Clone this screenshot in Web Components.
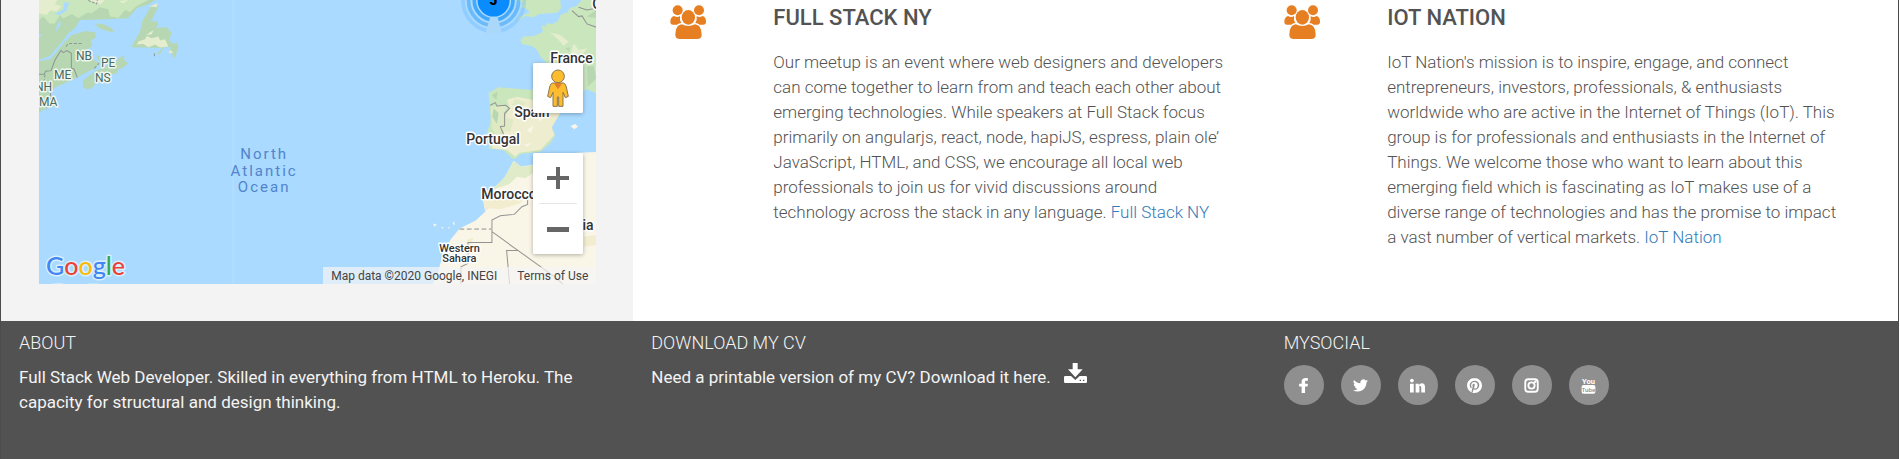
<!DOCTYPE html>
<html lang="en">
<head>
<meta charset="utf-8">
<title>Full Stack Web Developer</title>
<style>
body { margin: 0; background: #fff; font-family: Roboto, "Liberation Sans", sans-serif; }
</style>
</head>
<body>
<portfolio-page>
  <area-map slot="side"></area-map>
  <meetup-card heading="FULL STACK NY">Our meetup is an event where web designers and developers can come together to learn from and teach each other about emerging technologies. While speakers at Full Stack focus primarily on angularjs, react, node, hapiJS, espress, plain ole’ JavaScript, HTML, and CSS, we encourage all local web professionals to join us for vivid discussions around technology across the stack in any language. <text-link>Full Stack NY</text-link></meetup-card>
  <meetup-card heading="IOT NATION">IoT Nation's mission is to inspire, engage, and connect entrepreneurs, investors, professionals, &amp; enthusiasts worldwide who are active in the Internet of Things (IoT). This group is for professionals and enthusiasts in the Internet of Things. We welcome those who want to learn about this emerging field which is fascinating as IoT makes use of a diverse range of technologies and has the promise to impact a vast number of vertical markets. <text-link>IoT Nation</text-link></meetup-card>
  <footer-column slot="footer" heading="ABOUT">Full Stack Web Developer. Skilled in everything from HTML to Heroku. The capacity for structural and design thinking.</footer-column>
  <footer-column slot="footer" heading="DOWNLOAD MY CV">Need a printable version of my CV? Download it here. <download-link></download-link></footer-column>
  <footer-column slot="footer" heading="MYSOCIAL"><social-links></social-links></footer-column>
</portfolio-page>

<script>
function define(name, render) {
  customElements.define(name, class extends HTMLElement {
    constructor() {
      super();
      this.attachShadow({ mode: 'open' });
    }
    connectedCallback() {
      this.shadowRoot.innerHTML = render(this);
    }
  });
}

define('portfolio-page', () => `
<style>
:host { display: block; margin-right: 1px; border: solid #4c4c4c; border-width: 0 1px 1px; background: #525252; color: #535353; }
main { display: grid; grid-template-columns: 1fr 2fr; background: #fff; }
aside { background: #f3f3f3; padding: 0 37px 37px 38px; }
section { display: grid; grid-template-columns: 1fr 1fr; padding-left: 37px; align-items: start; }
footer { display: grid; grid-template-columns: repeat(3, 1fr); padding: 10px 0 53px; }
</style>
<main><aside><slot name="side"></slot></aside><section><slot></slot></section></main>
<footer><slot name="footer"></slot></footer>`);

define('meetup-card', el => `
<style>
:host { display: grid; grid-template-columns: 103px 1fr; padding: 2px 52px 0 0; }
svg { display: block; width: 36px; height: 34px; margin-top: 3px; fill: #e67e22; }
h2 { margin: 0 0 16px; font-size: 22px; line-height: 32px; font-weight: 500; }
p { margin: 0; font-size: 17px; line-height: 25px; font-weight: 300; }
</style>
<svg viewBox="30 15 108 102" aria-hidden="true">
  <circle cx="53" cy="31" r="15"/><circle cx="117" cy="31" r="15"/>
  <path d="M42 48q11 6 18 0q-2 12 4 21q-8 0-13 5H39q-8 0-8-9q0-14 11-17zM128 48q-11 6-18 0q2 12-4 21q8 0 13 5h11q8 0 8-9q0-14-10-17z"/>
  <ellipse cx="85" cy="52" rx="20" ry="22"/>
  <path d="M65 73q20 10 40 0q20 2 20 31q0 13-14 13H60q-14 0-14-13q0-29 19-31z"/>
</svg>
<div><h2>${el.getAttribute('heading')}</h2><p><slot></slot></p></div>`);

define('text-link', () => `
<style>:host { display: inline; } a { color: #337ab7; text-decoration: none; }</style>
<a href="#"><slot></slot></a>`);

define('footer-column', el => `
<style>
:host { display: block; padding: 0 18px; color: #f4f4f4; }
h3 { margin: 0 0 10px; font-size: 18px; line-height: 24px; font-weight: 300; }
div { font-size: 17px; line-height: 25px; }
</style>
<h3>${el.getAttribute('heading')}</h3><div><slot></slot></div>`);

define('download-link', () => `
<style>
:host { display: inline-block; margin: -4px 0 0 9px; }
svg { display: block; width: 23px; height: 20px; fill: #fff; }
</style>
<a href="#" aria-label="Download my CV"><svg viewBox="0 0 69 60"><path fill-rule="evenodd" d="M26 0h15v19h15L34 43 12 19h14zM4 39h17l13 12 13-12h18q4 0 4 4v13q0 4-4 4H4q-4 0-4-4V43q0-4 4-4zM47 50h4v4h-4zM57 50h4v4h-4z"/></svg></a>`);

const networks = [
  ['Facebook', '<path d="M14.500 13.500h4l.5-4.500h-4.500V7c0-2 .5-2.500 2-2.500H19V.2C18 0 16.900 0 15.600 0 11.500 0 9 2 9 6v3H5v4.500h4V24h5.500z"/>'],
  ['Twitter', '<path d="M23.950 4.570a10 10 0 0 1-2.820.770 4.960 4.960 0 0 0 2.160-2.720c-.950.560-2 .960-3.130 1.180a4.920 4.920 0 0 0-8.380 4.490C7.690 8.100 4.070 6.130 1.640 3.160a4.920 4.920 0 0 0 1.520 6.570 4.900 4.900 0 0 1-2.230-.610v.060a4.920 4.920 0 0 0 3.950 4.830 4.900 4.900 0 0 1-2.210.080 4.940 4.940 0 0 0 4.600 3.420A9.870 9.870 0 0 1 0 19.540a13.940 13.940 0 0 0 7.550 2.210c9.050 0 14-7.500 14-13.980 0-.210 0-.420-.020-.630a9.940 9.940 0 0 0 2.460-2.550z"/>'],
  ['LinkedIn', '<circle cx="3" cy="4" r="3"/><path d="M0 9h6v14H0zM9 9h5v2q2-2.500 5-2.500 5 0 5 6V23h-6v-7.500q0-3-2-3T15 15.500V23H9z"/>'],
  ['Pinterest', '<path d="M12.017 0C5.396 0 .029 5.367.029 11.987c0 5.079 3.158 9.417 7.618 11.162-.105-.949-.199-2.403.041-3.439.219-.937 1.406-5.957 1.406-5.957s-.359-.72-.359-1.781c0-1.663.967-2.911 2.168-2.911 1.024 0 1.518.769 1.518 1.688 0 1.029-.653 2.567-.992 3.992-.285 1.193.6 2.165 1.775 2.165 2.128 0 3.768-2.245 3.768-5.487 0-2.861-2.063-4.869-5.008-4.869-3.41 0-5.409 2.562-5.409 5.199 0 1.033.394 2.143.889 2.741.099.12.112.225.085.345-.09.375-.293 1.199-.334 1.363-.053.225-.172.271-.401.165-1.495-.69-2.433-2.878-2.433-4.646 0-3.776 2.748-7.252 7.92-7.252 4.158 0 7.392 2.967 7.392 6.923 0 4.135-2.607 7.462-6.233 7.462-1.214 0-2.354-.629-2.758-1.379l-.749 2.848c-.269 1.045-1.004 2.352-1.498 3.146 1.123.345 2.306.535 3.55.535 6.607 0 11.985-5.365 11.985-11.987C23.97 5.39 18.592.026 11.985.026z"/>'],
  ['Instagram', '<g fill="none" stroke="#fff" stroke-width="3"><rect x="2" y="2" width="20" height="20" rx="5"/><circle cx="12" cy="12" r="5"/></g><circle cx="18" cy="6" r="2"/>'],
  ['YouTube', '<text x="12" y="9" text-anchor="middle" font-size="12" font-weight="700">You</text><rect x="1" y="11" width="22" height="14" rx="3"/><text x="12" y="22" text-anchor="middle" font-size="10" font-weight="500" fill="#8f8f8f">Tube</text>']
];
define('social-links', () => `
<style>
:host { display: block; }
nav { display: flex; gap: 17px; }
a { display: grid; place-items: center; width: 40px; height: 40px; border-radius: 50%; background: #8f8f8f; }
svg { display: block; width: 15px; height: 15px; fill: #fff; overflow: visible; }
</style>
<nav>${networks.map(([name, art]) => `<a href="#" aria-label="${name}"><svg viewBox="0 0 24 24">${art}</svg></a>`).join('')}</nav>`);

define('area-map', () => `
<style>
:host { display: block; position: relative; overflow: hidden; background: #aadaff; }
.chart { display: block; width: 100%; height: 284px; }
button { display: grid; place-items: center; width: 50px; height: 50px; padding: 0; border: 0; background: #fff; }
.person, .zoom { position: absolute; right: 13px; background: #fff; border-radius: 2px; box-shadow: 0 1px 4px rgba(0,0,0,.3); overflow: hidden; }
.person { top: 63px; }
.zoom { bottom: 30px; }
hr { margin: 0 6px; border: 0; height: 1px; background: #e6e6e6; }
.credit { position: absolute; right: 0; bottom: 0; display: flex; gap: 20px; padding: 1px 8px 0; background: rgba(245,245,245,.7); color: #444; font-size: 12px; line-height: 16px; }
.credit a { color: inherit; text-decoration: none; }
.label { fill: #333; stroke: #fff; stroke-width: 3px; stroke-linejoin: round; paint-order: stroke; font-weight: 500; font-size: 14px; }
.small { font-size: 11px; }
.state { font-weight: 400; font-size: 12px; fill: #466b66; stroke: #eef5ec; }
.sea { fill: #5184cd; font-size: 15px; letter-spacing: 2px; }
.logo { font: 500 25px Lato, sans-serif; stroke: #d9effd; stroke-width: 3px; paint-order: stroke; stroke-linejoin: round; }
</style>
<svg class="chart" viewBox="39 0 557 284" preserveAspectRatio="xMidYMid slice" role="img" aria-label="Map of the North Atlantic">
  <rect x="39" width="557" height="284" fill="#aadaff"/>
  <path d="M233 0V284" stroke="#b9e0ff"/>
  <g transform="scale(.33333)">
    <path fill="#b7d7b2" d="M117 0H465L448 12 410 25 398 40 383 55 300 59 240 60 225 85 205 100 187 125 165 150 150 168 117 180zM117 184L150 178 165 162 190 130 215 105 255 93 285 97 288 113 272 122 276 138 262 148 276 165 278 178 300 190 285 205 250 222 232 232 215 240 190 252 165 262 150 278 153 300 165 318 140 325 120 335H117z"/>
    <path fill="#c9e6bd" d="M117 0H445L410 18 390 36 375 30 355 54 330 50 325 28 300 22 275 40 262 38 235 55 215 42 190 56 180 45 165 70 150 72 130 50 117 60z"/>
    <path fill="#e5edcf" d="M117 0H172L165 14 185 18 170 35 150 32 140 45 117 40zM262 0H315L302 14 282 8zM355 4L385 0 370 10z"/>
    <path fill="#aadaff" d="M192 8L208 8 200 32 178 46 165 42 190 28zM117 100L126 105 117 112zM170 80L180 60 182 75 168 96z"/>
    <path fill="#b7d7b2" d="M285 70L310 73 330 82 342 93 335 97 315 91 298 85zM248 242L285 213 318 200 345 190 355 176 373 165 372 180 384 190 370 203 355 208 350 220 320 228 298 238 275 265 262 268 249 260zM395 138L420 95 428 60 440 42 450 22 473 12 475 20 453 65 470 64 475 74 468 84 500 82 515 100 506 120 520 132 530 128 535 142 525 174 518 168 515 155 505 162 512 142 492 142 478 164 470 162 487 144 395 142zM288 165L300 170 295 183z"/>
    <path fill="#e5edcf" d="M415 125L435 118 440 108 455 115 475 110 480 122 495 118 505 140 480 143 465 134 445 142 430 132 410 134zM438 105L460 90 455 103zM447 20L473 10 470 22zM510 150L520 158 505 160z"/>
    <g fill="none" stroke="#8b9796" stroke-width="3">
      <path d="M117 223H133L137 214 153 212 165 180 183 151 190 158 200 152 214 160V205L222 207 232 233"/>
      <path stroke-dasharray="9 5" d="M198 140L205 131 245 131M135 224L132 245M152 280L150 302M140 315V330M283 205L297 190M463 160V170"/>
      <path stroke-dasharray="8 4" d="M265 2L290 12 292 0"/>
    </g>
    <path fill="#d4edfd" d="M150 850L175 848 200 852zM262 850H295V852H262z"/>
  </g>
  <g transform="translate(320) scale(.33333)">
    <path fill="#c9e6bd" d="M585 0H720L722 25 712 38 655 43 640 52 615 48 590 63 600 50 628 38 622 28 600 22 610 10zM828 0H785L768 18 748 25 742 37 720 45 712 65 695 72 680 70 675 80 664 76 668 96 640 108 610 110 600 120 605 132 635 138 650 150 660 170 685 195V272L640 270 575 270 535 262 525 272 506 280 512 305 515 330 510 370 498 405 508 418 505 446 550 450 575 475 585 478 600 462 660 455 692 428 705 405 695 382 720 340 740 318 790 272 800 268 828 280z"/>
    <path fill="#efedd0" d="M558 295L590 290 640 300 720 338 694 382 702 405 660 450 598 458 585 470 560 450 515 445 525 410 548 400 555 350 568 325z"/>
    <path fill="#c9e6bd" d="M505 278L535 262 640 270 670 285 640 300 600 288 565 298 548 310 560 330 545 355 540 402 500 404 512 370z"/>
    <path fill="#dfe9c4" d="M512 320L560 318 550 350 540 402 525 405 515 385zM540 350L580 358 570 395 545 392zM585 295L620 310 600 325 575 315z"/>
    <path fill="#b7d7b2" d="M520 325L535 340 530 372 516 350zM515 285L532 275 528 300zM800 200L820 198 828 235 802 260zM735 145L748 142 747 155zM800 50L828 30V54z"/>
    <path fill="#e5edcf" d="M690 98L720 105 745 125 730 138 715 120zM760 130L775 150 800 145 790 160 750 165z"/>
    <path fill="#f9f5e7" d="M580 482L600 500 640 494 690 470 770 458 828 456V852H338L355 815 360 790 390 720 418 685 465 662 495 635 488 600 505 572 545 545 560 520z"/>
    <path fill="#e0ecc9" d="M580 482L604 500 640 496V518L615 535 590 530 568 552 530 565 505 575 540 545 555 528z"/>
    <path fill="#f2edcf" d="M490 600L530 575 590 570 620 580 600 610 540 628 505 625 495 635zM790 710L828 705V735L790 740zM440 720L460 712 450 740z"/>
    <path fill="#f9f5e7" d="M595 330L615 322 610 337zM620 390L640 375 632 400zM610 435L635 428 620 440zM655 345L668 355 655 365zM750 378L765 372 773 380 762 388zM338 670L350 674 343 680zM362 680L370 682 366 686zM397 670L402 662 403 676zM385 680L390 683 384 686z"/>
    <g fill="none" stroke="#939393" stroke-width="3">
      <path d="M510 316L525 308 530 318 556 316 568 325 553 340 553 378 540 380 550 402M755 32L775 50 785 48 800 72 828 82M775 22L800 30 828 25M622 600V613L605 620 582 643 540 647 515 660V727H443V790L422 800V852M515 695L700 828 728 852M568 852L559 751H595"/>
      <path stroke="#bdbbb4" stroke-width="5" stroke-dasharray="14 8" d="M418 687H515"/>
    </g>
    <g fill="none" stroke="#2c9cf8" stroke-width="11">
      <circle cx="520" cy="2" r="58" opacity=".8"/><circle cx="520" cy="2" r="75" opacity=".5"/><circle cx="520" cy="2" r="92" opacity=".2"/>
    </g>
    <circle cx="520" cy="2" r="48" fill="#0a8cff"/>
    <path fill="#abd7fb" d="M510 51H532L546 104H494z"/>
  </g>
  <text x="493" y="5" text-anchor="middle" font-size="14" font-weight="900">5</text>
  <g class="label state"><text x="76" y="60">NB</text><text x="101" y="67">PE</text><text x="95" y="82">NS</text><text x="54" y="79">ME</text><text x="35" y="91">NH</text><text x="39" y="106">MA</text></g>
  <g class="label"><text x="550" y="63">France</text><text x="514" y="117">Spain</text><text x="466" y="144">Portugal</text><text x="481" y="199">Morocco</text><text x="549" y="230">Algeria</text><text x="592" y="9">G</text></g>
  <g class="label small"><text x="439" y="252">Western</text><text x="442" y="262">Sahara</text></g>
  <g class="sea" text-anchor="middle"><text x="264" y="159">North</text><text x="264" y="176">Atlantic</text><text x="264" y="192">Ocean</text></g>
  <text class="logo" x="46" y="275"><tspan fill="#4285f4">G</tspan><tspan fill="#ea4335">o</tspan><tspan fill="#fbbc05">o</tspan><tspan fill="#4285f4">g</tspan><tspan fill="#34a853">l</tspan><tspan fill="#ea4335">e</tspan></text>
</svg>
<div class="person"><button aria-label="Street view"><svg width="22" height="38" viewBox="0 0 66 114"><g fill="#fbbc2d" stroke="#8a7550" stroke-width="3"><path d="M16 42H50Q56 44 58 54L64 82 55 86 48 70V112H35V84H31V112H18V70L11 86 2 82 8 54Q10 44 16 42z"/><circle cx="33" cy="22" r="19"/></g><path fill="#de7f2c" d="M20 42H46L33 61z"/></svg></button></div>
<div class="zoom"><button aria-label="Zoom in"><svg width="24" height="24"><path fill="#666" d="M10 1h4v9h9v4h-9v9h-4v-9H1v-4h9z"/></svg></button><hr><button aria-label="Zoom out"><svg width="24" height="24"><path fill="#666" d="M1 10h22v5H1z"/></svg></button></div>
<div class="credit"><span>Map data ©2020 Google, INEGI</span><a href="#">Terms of Use</a></div>`);
</script>
</body>
</html>
